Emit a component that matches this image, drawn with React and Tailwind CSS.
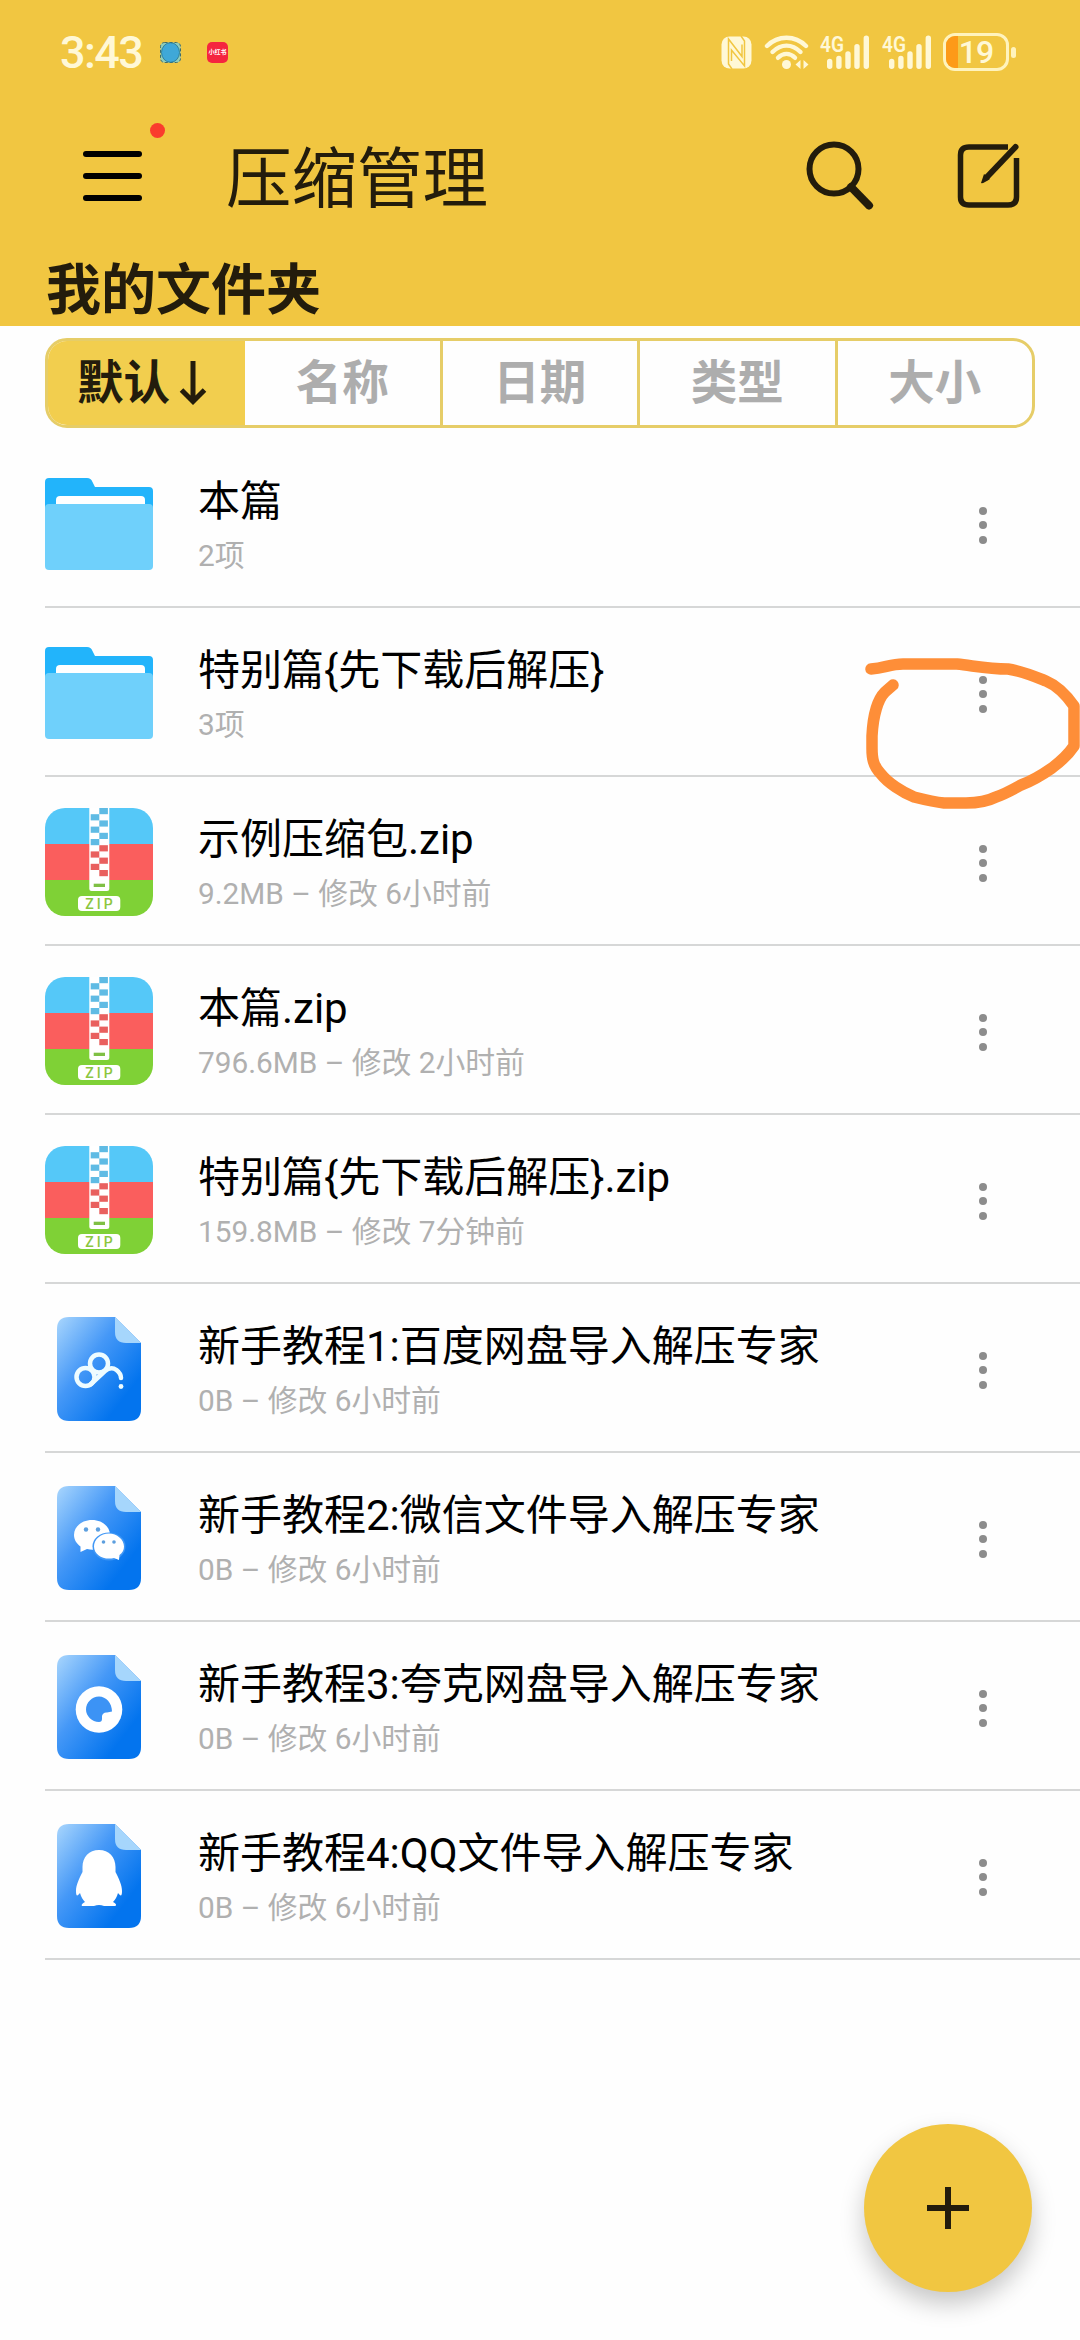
import React from "react";

const tabs = ["名称", "日期", "类型", "大小"];

const files = [
  { id: 1, type: "folder", name: "本篇", info: "2项" },
  { id: 2, type: "folder", name: "特别篇{先下载后解压}", info: "3项" },
  { id: 3, type: "zip", name: "示例压缩包.zip", info: "9.2MB – 修改 6小时前" },
  { id: 4, type: "zip", name: "本篇.zip", info: "796.6MB – 修改 2小时前" },
  { id: 5, type: "zip", name: "特别篇{先下载后解压}.zip", info: "159.8MB – 修改 7分钟前" },
  { id: 6, type: "baidu", name: "新手教程1:百度网盘导入解压专家", info: "0B – 修改 6小时前" },
  { id: 7, type: "wechat", name: "新手教程2:微信文件导入解压专家", info: "0B – 修改 6小时前" },
  { id: 8, type: "quark", name: "新手教程3:夸克网盘导入解压专家", info: "0B – 修改 6小时前" },
  { id: 9, type: "qq", name: "新手教程4:QQ文件导入解压专家", info: "0B – 修改 6小时前" },
];

const Signal = () => (
  <svg className="h-[36px] w-[50px] overflow-visible" viewBox="0 0 50 36">
    <text x="0" y="18" fontSize="22" fontWeight="600" textLength="24" lengthAdjust="spacingAndGlyphs" fill="#fff8d6">
      4G
    </text>
    <g stroke="#fff8d6" strokeWidth="5.4" strokeLinecap="round">
      <path d="M9.7 27.5V32.3M18.9 24.5V32.3M28 20V32.3M37 12.7V32.3M46.3 4.2V32.3" />
    </g>
  </svg>
);

const StatusBar = () => (
  <div className="flex h-[104px] items-center pl-[60px] pr-[64px] text-[#fff8d6]">
    <span className="w-[82px] whitespace-nowrap text-[45px] font-medium leading-none tracking-[-1.6px]">3:43</span>
    <svg className="ml-[18px] h-[21px] w-[21px]" viewBox="0 0 21 21">
      <rect x="0.5" y="0.5" width="20" height="20" rx="4" fill="#8fcdbb" stroke="#3f6b6b" strokeDasharray="3 2" />
      <ellipse cx="10.5" cy="10.5" rx="9" ry="9.8" fill="#3fa8d8" stroke="#26738c" strokeWidth="0.8" />
    </svg>
    <div className="ml-[26px] flex h-[21px] w-[21px] items-center justify-center rounded-[5px] bg-[#f5253f]">
      <span className="whitespace-nowrap text-[6px] font-bold leading-none text-white">小红书</span>
    </div>
    <div className="ml-auto flex items-center">
      <svg className="h-[33px] w-[31px]" viewBox="0 0 31 33">
        <rect x="0.5" y="0.5" width="30" height="32" rx="8" fill="#fff8d6" />
        <g fill="none" stroke="#f1c641" strokeWidth="1.5">
          <path d="M11 33L7.500 28V3L21 20.500V8.500" />
          <path d="M20 0L23.500 5V30L10.500 14V25" />
        </g>
      </svg>
      <svg className="ml-[12px] h-[36px] w-[45px]" viewBox="0 0 45 36">
        <g fill="none" stroke="#fff8d6" strokeWidth="4.4" strokeLinecap="round">
          <path d="M3 12C14 1 31 1 42 12" />
          <path d="M8.500 18C17 9.500 28 9.500 36.500 18" />
          <path d="M14 23.800C19 18.500 26 18.500 31 23.800" />
        </g>
        <circle cx="22.500" cy="30.500" r="4.500" fill="#fff8d6" />
        <path d="M36.500 26V35L31.500 30.500ZM39.500 26V35L44.500 30.500Z" fill="#fff8d6" />
      </svg>
      <div className="ml-[11px] flex gap-[12px]">
        <Signal />
        <Signal />
      </div>
      <div className="ml-[11px] flex items-center gap-[2px]">
        <div className="flex h-[38px] w-[66px] items-center overflow-hidden rounded-[12px] border-[3px] border-[#fff3bd]">
          <div className="h-full w-[12px] bg-[#fd9a18]" />
          <span className="w-[36px] text-center text-[32px] font-medium leading-none tracking-[-1px]">19</span>
        </div>
        <div className="h-[11px] w-[5px] rounded-full bg-[#fff3bd]" />
      </div>
    </div>
  </div>
);

const Header = () => (
  <header className="flex h-[326px] flex-col bg-[#f1c641] text-[#231c0c]">
    <StatusBar />
    <div className="flex h-[144px] items-center pl-[83px] pr-[59px]">
      <div className="relative flex w-[59px] flex-col gap-[16px]">
        <div className="h-[6px] rounded-full bg-black" />
        <div className="h-[6px] rounded-full bg-black" />
        <div className="h-[6px] rounded-full bg-black" />
        <span className="absolute -top-[28px] left-[67px] h-[15px] w-[15px] rounded-full bg-[#fa3c2d]" />
      </div>
      <h1 className="ml-[84px] whitespace-nowrap pt-[7px] text-[65.500px] leading-none">压缩管理</h1>
      <svg className="ml-auto h-[70px] w-[68px]" viewBox="0 0 68 70" fill="none" stroke="#231c0c">
        <circle cx="28" cy="28" r="24.500" strokeWidth="6" />
        <path d="M45 46L63 64.500" strokeWidth="8" strokeLinecap="round" />
      </svg>
      <svg className="ml-[83px] h-[66px] w-[64px]" viewBox="0 0 64 66" fill="none" stroke="#231c0c">
        <path d="M51 4H12Q3.500 4 3.500 12V54Q3.500 62 12 62H51Q59.500 62 59.500 54V15" strokeWidth="5.500" />
        <path d="M58.500 4L30 34" strokeWidth="6" strokeLinecap="round" />
        <path d="M27 31L24 40Q26 41 33 36Z" fill="#231c0c" stroke="none" />
      </svg>
    </div>
    <h2 className="pl-[46px] pt-[15px] text-[55px] font-bold leading-none">我的文件夹</h2>
  </header>
);

const SortTabs = () => (
  <div className="mx-[45px] mt-[12px] flex h-[90px] overflow-hidden rounded-[22px] border-[3px] border-[#e6cd68] text-[46.500px] font-bold text-[#adadad]">
    <div className="flex w-[197px] items-center justify-center gap-[9px] bg-[#f2ce4e] pr-[9px] text-[#231c0c]">
      <span className="leading-none">默认</span>
      <svg className="h-[46px] w-[28px]" viewBox="0 0 28 46" fill="none" stroke="#231c0c" strokeWidth="5">
        <path d="M14 1V42M2.500 30L14 41.500L25.500 30" />
      </svg>
    </div>
    {tabs.map((t, i) => (
      <div
        key={t}
        className={`flex flex-1 items-center justify-center leading-none ${i > 0 ? "border-l-[3px] border-[#e6cd68]" : ""}`}
      >
        {t}
      </div>
    ))}
  </div>
);

const FolderIcon = () => (
  <svg className="h-[92px] w-[108px]" viewBox="0 0 108 92">
    <path d="M4 0H42Q46 0 47.500 4L50 9H104Q108 9 108 13V50H0V4Q0 0 4 0Z" fill="#22b4fb" />
    <path d="M11 40V22Q11 18 15 18H96Q100 18 100 22V40Z" fill="#fff" />
    <rect y="26" width="108" height="66" rx="4" fill="#6fd0fb" />
  </svg>
);

const ZipIcon = () => (
  <svg className="h-[108px] w-[108px]" viewBox="0 0 108 108">
    <defs>
      <clipPath id="zip">
        <rect width="108" height="108" rx="20" />
      </clipPath>
    </defs>
    <g clipPath="url(#zip)">
      <rect width="108" height="36" fill="#55c8f8" />
      <rect y="36" width="108" height="36" fill="#fa5e5d" />
      <rect y="72" width="108" height="36" fill="#7fd136" />
    </g>
    <path d="M44.300 0H64.300V81Q64.300 83 62 83H46.500Q44.300 83 44.300 81Z" fill="#fff" />
    {Array.from({ length: 11 }).map((_, i) => (
      <rect
        key={i}
        x={i % 2 ? 45.7 : 54.3}
        y={i * 6.2}
        width="8.600"
        height="6.200"
        fill={i < 6 ? "#5fbbe4" : "#e9605f"}
      />
    ))}
    <rect x="48.700" y="75.700" width="11.300" height="3.300" fill="#7fc044" />
    <rect x="33" y="88" width="42.300" height="15" rx="4" fill="#fff" />
    <text x="55.500" y="100.500" fontSize="14" fontWeight="500" textAnchor="middle" letterSpacing="3" fill="#8cc63f">
      ZIP
    </text>
  </svg>
);

const glyphs = {
  baidu: (
    <g>
      <g fill="none" stroke="#eefcff" strokeWidth="4.500">
        <circle cx="28.500" cy="60" r="9" />
        <circle cx="42" cy="46.500" r="9" />
        <path d="M34 67L48 54Q54 49 59.500 53Q64 56.500 64 61" strokeLinecap="round" />
      </g>
      <circle cx="64" cy="69.500" r="2.400" fill="#eefcff" />
    </g>
  ),
  wechat: (
    <g>
      <path d="M35 34C25 34 17 40.500 17 49C17 54 20 58 23.500 60.500L23.500 66L30 63C42 66 53 59 53 49C53 40.500 45 34 35 34Z" fill="#fff" />
      <ellipse cx="52" cy="60.500" rx="16.500" ry="14" fill="#3f97f6" />
      <path d="M52 47.500C43.500 47.500 37 53.500 37 60.500C37 69 47 74.500 57 72L62 74L62.500 69C65.500 67 67 64 67 60.500C67 53.500 60 47.500 52 47.500Z" fill="#fff" />
      <g fill="#5c9fdf">
        <circle cx="29" cy="43.500" r="2.200" />
        <circle cx="41" cy="43.500" r="2.200" />
        <circle cx="46.500" cy="56" r="1.800" />
        <circle cx="57" cy="56" r="1.800" />
      </g>
    </g>
  ),
  quark: (
    <g>
      <circle cx="42" cy="54.500" r="23.300" fill="#fff" />
      <path d="M55 56.500C55 48 49 41.500 42 41.500C35 41.500 29 47.500 29 54.500C29 61 35 67 42 67Q45 67 45 64V61Q46 57 50 57.500Z" fill="#3c93f5" />
    </g>
  ),
  qq: (
    <path
      d="M42 26C32 26 25.500 33 25.500 43V48C22 55 19 61 19 67C19 72 20 73 23 69C24 73 26 76 28 78C24 80 24 82 26 82H37Q42 80 47 82H57C60 82 60 80 56 78C58 76 60 73 61 69C64 73 65 72 65 67C65 61 62 55 58.500 48V43C58.500 33 52 26 42 26Z"
      fill="#fff"
    />
  ),
};

const DocIcon = ({ type }) => (
  <svg className="h-[104px] w-[84px]" viewBox="0 0 84 104">
    <defs>
      <linearGradient id="doc" x1="0" y1="0" x2="0.900" y2="0.850">
        <stop offset="0" stopColor="#a9d6fd" />
        <stop offset="0.450" stopColor="#4598f7" />
        <stop offset="0.900" stopColor="#0374ee" />
      </linearGradient>
    </defs>
    <path d="M12 0H58L84 26V92Q84 104 72 104H12Q0 104 0 92V12Q0 0 12 0Z" fill="url(#doc)" />
    <path d="M58 0L84 26H69Q58 26 58 15Z" fill="#a6d6fc" />
    {glyphs[type]}
  </svg>
);

const FileIcon = ({ type }) => {
  if (type === "folder") return <FolderIcon />;
  if (type === "zip") return <ZipIcon />;
  return <DocIcon type={type} />;
};

const FileRow = ({ file }) => (
  <div className="ml-[45px] flex h-[169px] items-center border-b-2 border-[#d6d7d7]">
    <div className="flex w-[108px] justify-center pt-[2px]">
      <FileIcon type={file.type} />
    </div>
    <div className="ml-[45px] flex-1 whitespace-nowrap pt-[6px]">
      <div className="text-[42px] leading-[60px] text-black">{file.name}</div>
      <div className="text-[29.800px] leading-[48px] text-[#b0b0b0]">{file.info}</div>
    </div>
    <div className="mr-[93px] flex flex-col gap-[6.500px] pt-[5px]">
      <span className="h-[8px] w-[8px] rounded-full bg-[#8c8c8c]" />
      <span className="h-[8px] w-[8px] rounded-full bg-[#8c8c8c]" />
      <span className="h-[8px] w-[8px] rounded-full bg-[#8c8c8c]" />
    </div>
  </div>
);

const App = () => {
  return (
    <div className="relative h-[2340px] w-[1080px] overflow-hidden bg-[#fefefe] font-['Roboto','Noto_Sans_CJK_SC',sans-serif]">
      <Header />
      <SortTabs />
      <main className="mt-[11px]">
        {files.map((f) => (
          <FileRow key={f.id} file={f} />
        ))}
      </main>

      {/* Hand-drawn mark */}
      <svg className="absolute left-[860px] top-[650px] h-[170px] w-[220px]" viewBox="860 650 220 170">
        <path
          d="M871 669C885 668 890 664 903 664H957C975 666 988 669 1008 669C1022 671 1036 677 1046 681C1058 686 1067 696 1074 706V746C1068 755 1060 762 1052 768C1042 775 1032 781 1021 785C1012 790 1005 794 996 797C986 802 976 803 966 803H944C934 802 922 799 914 797C902 792 888 783 881 774C873 766 872 758 872 748V736C873 715 878 699 885 692L893 685"
          fill="none"
          stroke="#fe8e38"
          strokeWidth="11.500"
          strokeLinecap="round"
          strokeLinejoin="round"
        />
      </svg>

      {/* Add button */}
      <button className="absolute left-[864px] top-[2124px] flex h-[168px] w-[168px] items-center justify-center rounded-full bg-[#f1c641] shadow-[0_12px_24px_rgba(0,0,0,0.22)]">
        <svg className="h-[42px] w-[42px]" viewBox="0 0 42 42" stroke="#231c0c" strokeWidth="6">
          <path d="M21 0V42M0 21H42" />
        </svg>
      </button>
    </div>
  );
};

export default App;
